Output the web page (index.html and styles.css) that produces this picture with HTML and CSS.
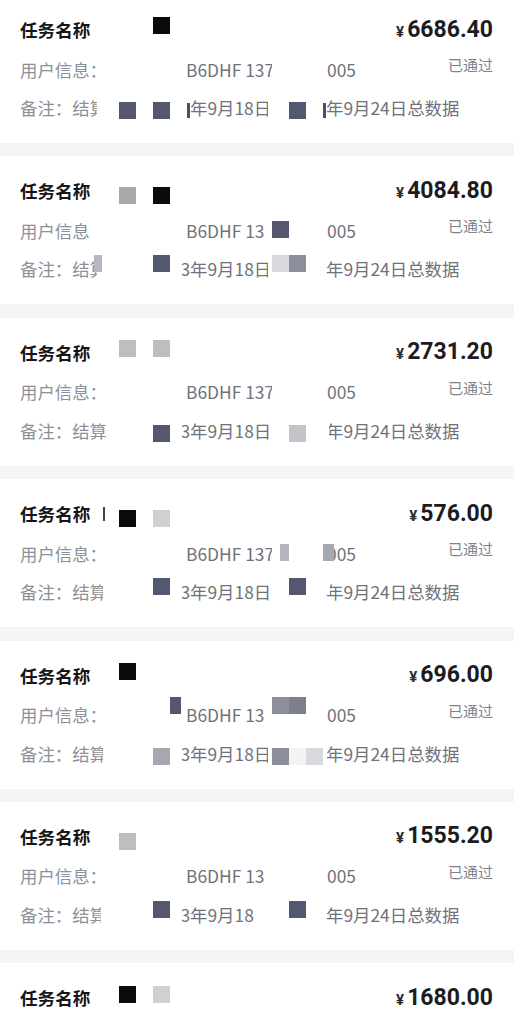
FILE: index.html
```
<!DOCTYPE html>
<html lang="zh-CN">
<head>
<meta charset="utf-8">
<title>任务列表</title>
<link rel="stylesheet" href="styles.css">
</head>
<body>
<div class="page">
  <div class="list">
    <div class="card">
      <div class="head"><span class="title">任务名称</span><span class="amount"><span class="yen">¥</span>6686.40</span></div>
      <div class="row info"><span class="lbl">用户信息：</span><span class="fa clip90">B6DHF 137</span><span class="fb">005</span><span class="status">已通过</span></div>
      <div class="row remark"><span class="lbl w77">备注：结算</span><span class="fa clip86 no3">年9月18日</span><span class="fb">年9月24日总数据</span></div>
    </div>
    <div class="card">
      <div class="head"><span class="title">任务名称</span><span class="amount"><span class="yen">¥</span>4084.80</span></div>
      <div class="row info"><span class="lbl">用户信息</span><span class="fa">B6DHF 13</span><span class="fb">005</span><span class="status">已通过</span></div>
      <div class="row remark"><span class="lbl w77">备注：结算</span><span class="fa clip86">3年9月18日</span><span class="fb">年9月24日总数据</span></div>
    </div>
    <div class="card">
      <div class="head"><span class="title">任务名称</span><span class="amount"><span class="yen">¥</span>2731.20</span></div>
      <div class="row info"><span class="lbl">用户信息：</span><span class="fa clip90">B6DHF 137</span><span class="fb">005</span><span class="status">已通过</span></div>
      <div class="row remark"><span class="lbl">备注：结算</span><span class="fa">3年9月18日</span><span class="fb">年9月24日总数据</span></div>
    </div>
    <div class="card">
      <div class="head"><span class="title">任务名称</span><span class="amount"><span class="yen">¥</span>576.00</span></div>
      <div class="row info"><span class="lbl">用户信息：</span><span class="fa clip90">B6DHF 137</span><span class="fb">005</span><span class="status">已通过</span></div>
      <div class="row remark"><span class="lbl w83">备注：结算</span><span class="fa">3年9月18日</span><span class="fb">年9月24日总数据</span></div>
    </div>
    <div class="card">
      <div class="head"><span class="title">任务名称</span><span class="amount"><span class="yen">¥</span>696.00</span></div>
      <div class="row info"><span class="lbl">用户信息：</span><span class="fa">B6DHF 13</span><span class="fb">005</span><span class="status">已通过</span></div>
      <div class="row remark"><span class="lbl w83">备注：结算</span><span class="fa clip86">3年9月18日</span><span class="fb">年9月24日总数据</span></div>
    </div>
    <div class="card">
      <div class="head"><span class="title">任务名称</span><span class="amount"><span class="yen">¥</span>1555.20</span></div>
      <div class="row info"><span class="lbl">用户信息：</span><span class="fa">B6DHF 13</span><span class="fb">005</span><span class="status">已通过</span></div>
      <div class="row remark"><span class="lbl w81">备注：结算</span><span class="fa">3年9月18</span><span class="fb">年9月24日总数据</span></div>
    </div>
    <div class="card">
      <div class="head"><span class="title">任务名称</span><span class="amount"><span class="yen">¥</span>1680.00</span></div>
      <div class="row info"><span class="lbl">用户信息：</span><span class="fa clip90">B6DHF 137</span><span class="fb">005</span><span class="status">已通过</span></div>
      <div class="row remark"><span class="lbl">备注：结算</span><span class="fa">3年9月18日</span><span class="fb">年9月24日总数据</span></div>
    </div>
  </div>

  <div class="mosaic" aria-hidden="true">
    <i class="m k" style="left:153px;top:17px"></i>
    <i class="m s" style="left:119px;top:102px"></i>
    <i class="m s" style="left:153px;top:102px"></i>
    <i class="m s" style="left:289px;top:102px"></i>
    <i class="m s2" style="left:187px;top:103px;width:3px;height:15px"></i>
    <i class="m s2" style="left:323px;top:103px;width:3px;height:15px"></i>

    <i class="m g1" style="left:119px;top:187px"></i>
    <i class="m k" style="left:153px;top:187px"></i>
    <i class="m s" style="left:272px;top:221px"></i>
    <i class="m g2" style="left:94px;top:255px;width:8px"></i>
    <i class="m s" style="left:153px;top:255px"></i>
    <i class="m l2" style="left:272px;top:255px"></i>
    <i class="m g3" style="left:289px;top:255px"></i>

    <i class="m g4" style="left:119px;top:340px"></i>
    <i class="m g4" style="left:153px;top:340px"></i>
    <i class="m s" style="left:153px;top:425px"></i>
    <i class="m g5" style="left:289px;top:425px"></i>
    <i class="m w" style="left:323px;top:425px;width:6px"></i>

    <i class="m k2" style="left:103px;top:507px;width:2px;height:14px"></i>
    <i class="m k" style="left:119px;top:510px"></i>
    <i class="m l1" style="left:153px;top:510px"></i>
    <i class="m g2" style="left:280px;top:544px;width:9px"></i>
    <i class="m g6" style="left:323px;top:544px;width:11px"></i>
    <i class="m s" style="left:153px;top:578px"></i>
    <i class="m s" style="left:289px;top:578px"></i>
    <i class="m w" style="left:323px;top:578px;width:7px"></i>

    <i class="m k" style="left:119px;top:663px"></i>
    <i class="m s" style="left:170px;top:697px;width:11px"></i>
    <i class="m g3" style="left:272px;top:697px"></i>
    <i class="m g7" style="left:289px;top:697px"></i>
    <i class="m g6" style="left:153px;top:748px"></i>
    <i class="m g3" style="left:272px;top:748px"></i>
    <i class="m l3" style="left:289px;top:748px"></i>
    <i class="m l2" style="left:306px;top:748px"></i>

    <i class="m g4" style="left:119px;top:833px"></i>
    <i class="m s" style="left:153px;top:901px"></i>
    <i class="m s" style="left:289px;top:901px"></i>

    <i class="m k" style="left:119px;top:986px"></i>
    <i class="m l1" style="left:153px;top:986px"></i>
  </div>
</div>
</body>
</html>
```

FILE: styles.css
```
html, body {
  margin: 0;
  padding: 0;
}

body {
  background: #f4f5f7;
  font-family: "Noto Sans CJK SC", "Noto Sans", sans-serif;
  color: #1b1b1d;
  overflow: hidden;
}

.page {
  position: relative;
  display: flow-root;
  width: 514px;
}

.list {
  margin-top: -5px;
  display: flex;
  flex-direction: column;
  gap: 13.4px;
}

.card {
  background: #ffffff;
  height: 148px;
  box-sizing: border-box;
  padding: 22px 21px 0 20px;
}

.head {
  display: flex;
  align-items: center;
  justify-content: space-between;
  height: 25px;
}

.title {
  font-size: 17.6px;
  font-weight: 700;
  line-height: 25px;
  color: #151517;
}

.amount {
  font-family: Roboto, "Liberation Sans", sans-serif;
  font-weight: 700;
  font-size: 23px;
  line-height: 25px;
  color: #1c1c1f;
  display: flex;
  align-items: baseline;
  margin-top: 2px;
}

.yen {
  font-size: 15px;
  font-weight: 700;
  margin-right: 3px;
  color: #2a2a2d;
}

.row {
  display: grid;
  grid-template-columns: 162px 141px 1fr auto;
  grid-template-rows: 25px;
  align-items: center;
  height: 25px;
  font-size: 17.4px;
  line-height: 25px;
  white-space: nowrap;
}

.info {
  margin-top: 14.5px;
}

.remark {
  margin-top: 13.5px;
}

.lbl {
  color: #8c9098;
  overflow: hidden;
}

.w77 { width: 77px; }
.w81 { width: 81px; }
.w83 { width: 83px; }

.fa,
.fb {
  color: #6f727b;
  overflow: hidden;
}

.info .fa {
  padding-left: 4px;
}

.remark .fa {
  text-indent: -1.6px;
}

.remark .fa.no3 {
  text-indent: 0;
  padding-left: 8px;
}

.clip90 { max-width: 90px; box-sizing: border-box; }
.clip86 { max-width: 86px; box-sizing: border-box; }

.info .fb {
  padding-left: 4px;
}

.remark .fb {
  padding-left: 3px;
}

.status {
  font-size: 15px;
  line-height: 16px;
  color: #7f828a;
  margin-bottom: 8px;
  justify-self: end;
}

.mosaic {
  position: absolute;
  left: 0;
  top: 0;
  width: 514px;
  height: 1024px;
  pointer-events: none;
}

.m {
  position: absolute;
  display: block;
  width: 17px;
  height: 17px;
}

.k { background: #0b0b0b; }
.k2 { background: #444448; }
.s { background: #53586f; }
.s2 { background: #4b5064; }
.g1 { background: #a9a9a9; }
.g2 { background: #b5b7c0; }
.g3 { background: #8c8e9b; }
.g4 { background: #bebebe; }
.g5 { background: #c2c4ca; }
.g6 { background: #a6a8b1; }
.g7 { background: #7c7f8f; }
.l1 { background: #d0d0d0; }
.l2 { background: #d8d9dd; }
.l3 { background: #f3f3f4; }
.w { background: #ffffff; }
```
